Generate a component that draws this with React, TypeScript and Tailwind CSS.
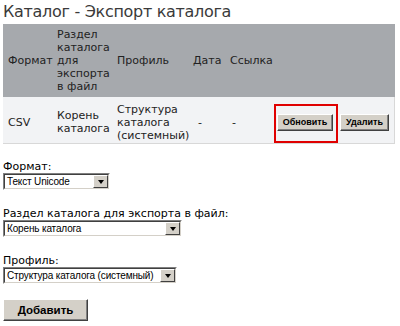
import React from "react";

function Sel({ w, text }: { w: string; text: string }) {
  return (
    <div className={`${w} h-[17px] border-t border-l border-[#808080] border-b-white border-r-white border-b border-r flex`}>
      <div className="flex-1 flex border-t border-l border-[#404040] border-b border-r border-b-[#d4d0c8] border-r-[#d4d0c8] bg-white min-w-0">
        <div className="flex-1 pl-[2px] text-[10px] tracking-[-0.15px] leading-[13px] text-black whitespace-nowrap overflow-hidden" style={{ fontFamily: '"Liberation Sans", Arial, sans-serif' }}>
          {text}
        </div>
        <div className="w-[15px] h-[13px] bg-[#d4d0c8] border-t border-l border-white border-b border-r border-b-[#404040] border-r-[#404040] flex items-center justify-center">
          <div className="w-0 h-0 border-l-[3.5px] border-r-[3.5px] border-t-[4px] border-l-transparent border-r-transparent border-t-black" />
        </div>
      </div>
    </div>
  );
}

function Btn({ children, cls }: { children: React.ReactNode; cls: string }) {
  return (
    <div className={`${cls} bg-[#d4d0c8] border-t border-l border-white border-b border-r border-b-[#404040] border-r-[#404040] flex items-center justify-center font-bold text-black`} style={{ fontFamily: '"Liberation Sans", Arial, sans-serif', boxShadow: "inset -1px -1px 0 #808080" }}>
      {children}
    </div>
  );
}

export default function App() {
  const f = { fontFamily: '"DejaVu Sans", Verdana, sans-serif' };
  return (
    <div className="w-[400px] h-[326px] bg-white relative overflow-hidden" style={f}>
      <div className="pl-[3px] pt-[1px] text-[16px] leading-[22px] tracking-[-0.3px] text-[#3a3a3a]">Каталог - Экспорт каталога</div>
      <div className="ml-[3px] mt-[1px] w-[392px]">
        <div className="flex bg-[#a6a9ad] h-[73px] items-center text-[11px] leading-[13px] text-[#222]">
          <div className="w-[54px] pl-[5px]">Формат</div>
          <div className="w-[60px]">Раздел<br />каталога<br />для<br />экспорта<br />в файл</div>
          <div className="w-[76px]">Профиль</div>
          <div className="w-[37px]">Дата</div>
          <div className="w-[44px]">Ссылка</div>
        </div>
        <div className="flex bg-[#f2f3f5] h-[47px] pt-[5px] pb-[1px] items-center text-[11px] leading-[13px] text-[#222] border-b border-r border-[#d8d8d8]">
          <div className="w-[54px] pl-[5px]">CSV</div>
          <div className="w-[60px]">Корень<br />каталога</div>
          <div className="w-[76px]">Структура<br />каталога<br />(системный)</div>
          <div className="w-[37px] pl-[5px]">-</div>
          <div className="w-[44px] pl-[2px]">-</div>
          <div className="flex items-center">
            <div className="relative ml-[3px]">
              <Btn cls="w-[56px] h-[17px] text-[9px]">Обновить</Btn>
              <div className="absolute left-[-3px] top-[-10px] w-[64px] h-[39px] border-2 border-[#e00000]" />
            </div>
            <Btn cls="ml-[7px] w-[49px] h-[17px] text-[9px]">Удалить</Btn>
          </div>
        </div>
      </div>
      <div className="pl-[3px] mt-[16px] text-[11px] leading-[13px] text-black">
        <div>Формат:</div>
        <div><Sel w="w-[107px]" text="Текст Unicode" /></div>
        <div className="mt-[17px]">Раздел каталога для экспорта в файл:</div>
        <div><Sel w="w-[179px]" text="Корень каталога" /></div>
        <div className="mt-[17px]">Профиль:</div>
        <div><Sel w="w-[174px]" text="Структура каталога (системный)" /></div>
        <div className="mt-[15px]"><Btn cls="w-[85px] h-[22px] text-[11.5px]">Добавить</Btn></div>
      </div>
    </div>
  );
}
